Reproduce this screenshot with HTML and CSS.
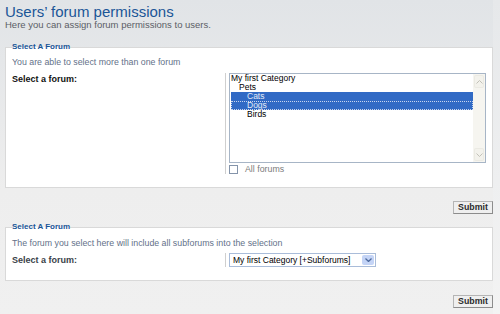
FILE: index.html
```html
<!DOCTYPE html>
<html lang="en">
<head>
    <meta charset="UTF-8">
    <title>Users' forum permissions</title>
    <link rel="stylesheet" href="styles.css">
</head>
<body>
    <div class="page">
        <h1>Users’ forum permissions</h1>
        <p class="intro">Here you can assign forum permissions to users.</p>

        <form>
            <fieldset class="panel">
                <legend>Select A Forum</legend>
                <p class="explain">You are able to select more than one forum</p>
                <dl>
                    <dt><label>Select a forum:</label></dt>
                    <dd>
                        <div class="listbox" role="listbox" aria-multiselectable="true">
                            <ul class="options">
                                <li>My first Category</li>
                                <li class="lvl1">Pets</li>
                                <li class="lvl2 selected">Cats</li>
                                <li class="lvl2 selected focused">Dogs</li>
                                <li class="lvl2">Birds</li>
                            </ul>
                            <div class="scrollbar">
                                <span class="scroll-btn">
                                    <svg width="7" height="4" viewBox="0 0 7 4"><path d="M0.5 3.5 L3.5 0.5 L6.5 3.5" fill="none" stroke="#c2c1b8" stroke-width="1"/></svg>
                                </span>
                                <span class="scroll-btn">
                                    <svg width="7" height="4" viewBox="0 0 7 4"><path d="M0.5 0.5 L3.5 3.5 L6.5 0.5" fill="none" stroke="#c2c1b8" stroke-width="1"/></svg>
                                </span>
                            </div>
                        </div>
                        <label class="all-forums"><span class="checkbox"></span>All forums</label>
                    </dd>
                </dl>
            </fieldset>
            <div class="submit-row"><button type="button" class="button">Submit</button></div>
        </form>

        <form>
            <fieldset class="panel second">
                <legend>Select A Forum</legend>
                <p class="explain">The forum you select here will include all subforums into the selection</p>
                <dl>
                    <dt><label>Select a forum:</label></dt>
                    <dd>
                        <div class="dropdown">
                            <span class="dropdown-text">My first Category [+Subforums]</span>
                            <span class="dropdown-btn">
                                <svg width="7" height="4" viewBox="0 0 7 4"><path d="M0.5 0.5 L3.5 3.5 L6.5 0.5" fill="none" stroke="#4d6a9e" stroke-width="1.3"/></svg>
                            </span>
                        </div>
                    </dd>
                </dl>
            </fieldset>
            <div class="submit-row"><button type="button" class="button">Submit</button></div>
        </form>
    </div>
</body>
</html>
```

FILE: styles.css
```css
html, body {
    margin: 0;
    height: 100%;
}

body {
    font-family: "Liberation Sans", Arial, sans-serif;
    background: linear-gradient(#e6e8ea 0, #eeeff0 180px, #f3f3f3 314px);
}

.page {
    width: 493px;
    min-height: 314px;
    box-sizing: border-box;
    padding: 0 0 0 5px;
    background: linear-gradient(#e1e4e7 0, #e9eaeb 120px, #eeeeee 190px, #f0f0f0 314px);
}

h1 {
    margin: 0;
    padding-top: 4px;
    font-size: 15px;
    line-height: 15px;
    font-weight: normal;
    color: #1a5597;
}

.intro {
    margin: 0;
    font-size: 9.5px;
    line-height: 11px;
    color: #5b5e66;
}

form {
    margin: 0;
}

.panel {
    margin: 12px 0 0;
    padding: 0 6px 13px;
    border: 1px solid #d9d9d9;
    background: #ffffff;
    min-width: 0;
}

.panel.second {
    margin-top: 8px;
}

legend {
    padding: 0;
    font-size: 8px;
    line-height: 10px;
    font-weight: bold;
    color: #1a5597;
}

.explain {
    margin: 5px 0 0;
    font-size: 8.8px;
    line-height: 11px;
    color: #637189;
}

.second .explain {
    margin-top: 6px;
}

dl {
    display: flex;
    margin: 5px 0 0;
}

.second dl {
    margin-top: 4px;
}

dt {
    flex-shrink: 0;
    width: 213px;
    padding-top: 1px;
    font-size: 9px;
    line-height: 11px;
    font-weight: bold;
    color: #111111;
}

.second dt {
    padding-top: 2px;
    color: #3a3f49;
}

dd {
    flex: 1;
    margin: 0;
    padding-left: 3px;
    border-left: 1px solid #cfcfcf;
}

/* multi select */
.listbox {
    display: flex;
    width: 257px;
    height: 90px;
    box-sizing: border-box;
    border: 1px solid #a7b5c6;
    background: #ffffff;
}

.options {
    flex: 1;
    list-style: none;
    margin: 0 0 0 1px;
    padding: 0;
    font-size: 8.5px;
    line-height: 9px;
    color: #000000;
}

.options li {
    height: 9px;
    white-space: nowrap;
}

.options .lvl1 {
    padding-left: 8px;
}

.options .lvl2 {
    padding-left: 16px;
}

.options .selected {
    background: #316ac5;
    color: #e3eaf7;
}

.options .focused {
    outline: 1px dotted #c9d6ee;
    outline-offset: -1px;
}

.scrollbar {
    display: flex;
    flex-direction: column;
    justify-content: space-between;
    width: 12px;
    padding: 1px 0;
    background: #f6f5f0;
}

.scroll-btn {
    display: flex;
    align-items: center;
    justify-content: center;
    height: 13px;
    margin: 0 1px;
    border-radius: 2px;
    background: #f3f2ec;
    box-shadow: inset 0 0 0 1px #ebeae3;
}

.all-forums {
    display: flex;
    align-items: center;
    height: 10px;
    margin-top: 1px;
    font-size: 8.8px;
    color: #7b7b7b;
}

.checkbox {
    width: 9px;
    height: 9px;
    box-sizing: border-box;
    margin-right: 7px;
    border: 1px solid #8494aa;
    background: #ffffff;
}

/* single select */
.dropdown {
    display: flex;
    align-items: center;
    width: 147px;
    height: 14px;
    box-sizing: border-box;
    border: 1px solid #a9bcd9;
    background: #ffffff;
}

.dropdown-text {
    flex: 1;
    padding-left: 3px;
    font-size: 8.5px;
    color: #000000;
    white-space: nowrap;
}

.dropdown-btn {
    display: flex;
    align-items: center;
    justify-content: center;
    width: 12px;
    height: 10px;
    margin-right: 1px;
    border-radius: 2px;
    background: #c4d4f6;
}

.submit-row {
    text-align: right;
    margin-top: 13px;
    line-height: 0;
}

.second + .submit-row {
    margin-top: 14px;
}

.button {
    width: 40px;
    height: 13px;
    padding: 0;
    border: 1px solid #8c8c8c;
    border-top-color: #b5b5b5;
    border-left-color: #b5b5b5;
    background: #efefef;
    font-family: "Liberation Sans", Arial, sans-serif;
    font-size: 8.8px;
    line-height: 11px;
    font-weight: bold;
    color: #2b2b2b;
}
```
